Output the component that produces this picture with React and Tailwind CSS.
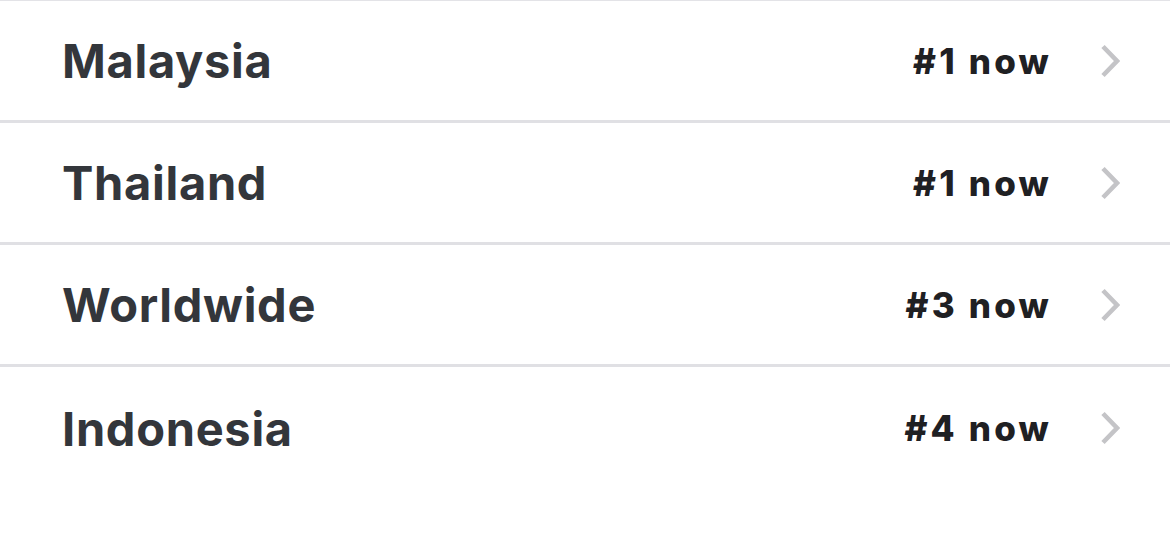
import React from 'react';

const rows = [
    { name: 'Malaysia', rank: '#1 now' },
    { name: 'Thailand', rank: '#1 now' },
    { name: 'Worldwide', rank: '#3 now' },
    { name: 'Indonesia', rank: '#4 now' },
];

const Chevron = () => (
    <svg width="20" height="34" viewBox="0 0 20 34" fill="none" className="shrink-0">
        <path d="M3 2.5 L17 17 L3 31.5" stroke="#c4c4c7" strokeWidth="4.6" strokeLinecap="butt" strokeLinejoin="miter" />
    </svg>
);

export default function App() {
    return (
        <div className="w-[1170px] h-[558px] bg-white font-['Inter',sans-serif] border-t border-[#e3e3e7]">
            {rows.map((row, i) => (
                <div
                    key={row.name}
                    className={`h-[122px] flex items-center pl-[62px] pr-[50px] ${i < rows.length - 1 ? 'border-b-[3px] border-[#e0e0e4]' : ''}`}
                >
                    <span className="flex-1 text-[47px] font-bold text-[#33363b] tracking-[0.7px] pt-[2px]">{row.name}</span>
                    <span className="text-[35px] font-extrabold text-[#1f2023] tracking-[3.2px] mr-[48px] pt-[1px]">{row.rank}</span>
                    <Chevron />
                </div>
            ))}
        </div>
    );
}
